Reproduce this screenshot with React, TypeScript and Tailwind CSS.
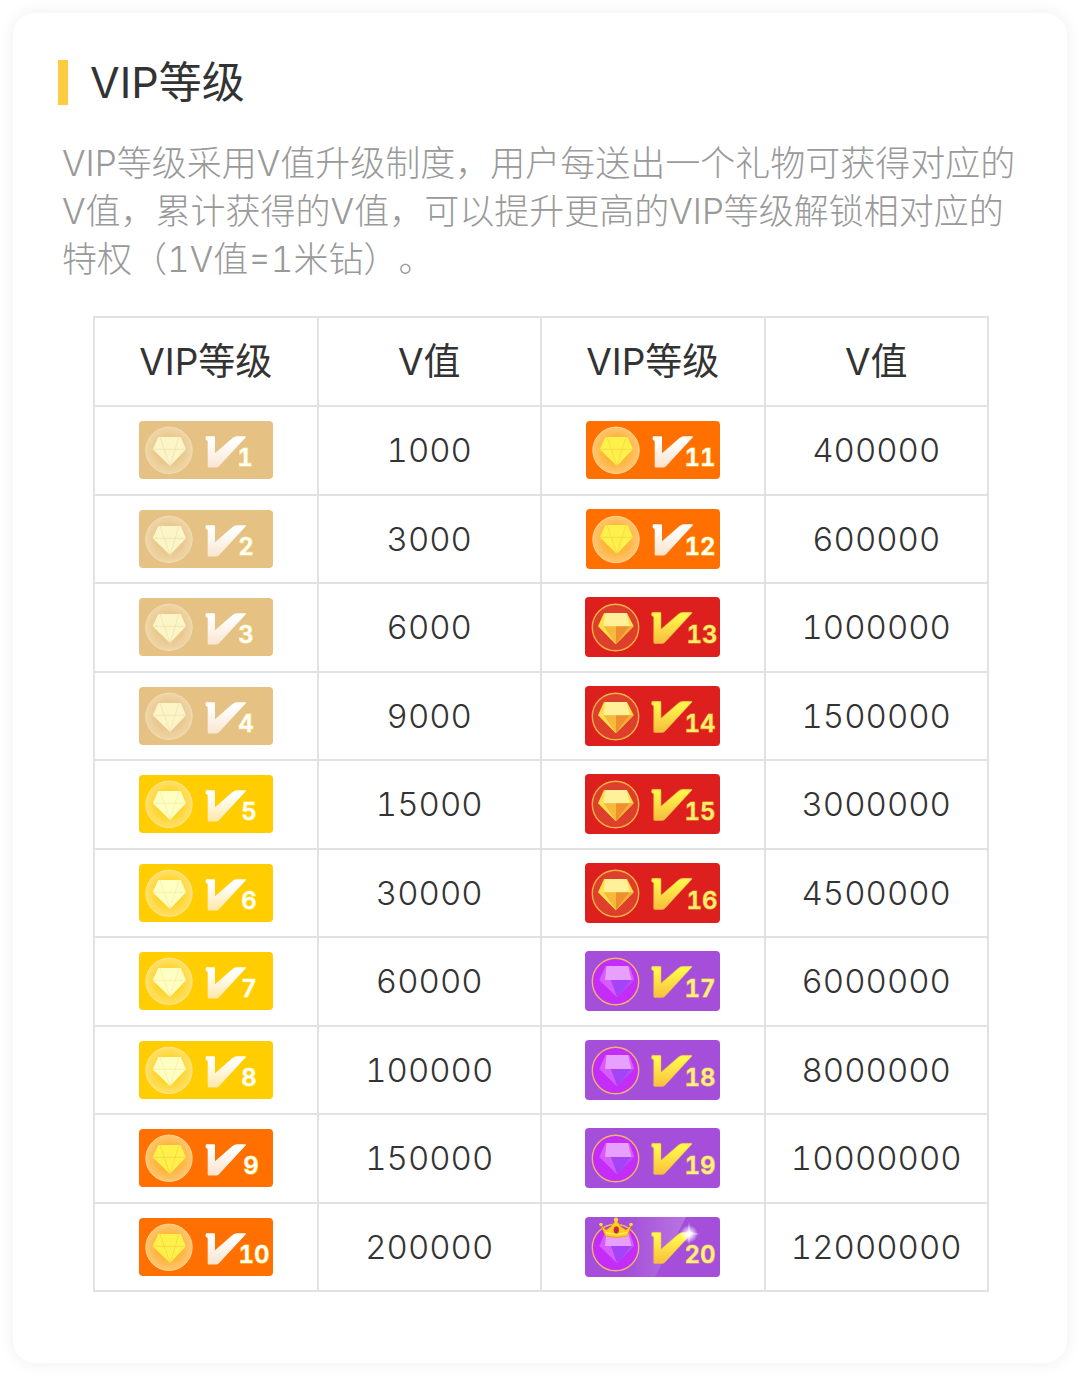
import React from "react";

type Theme = "tan" | "yellow" | "orange" | "red" | "purple";

interface ThemeColors {
  bg: string;
  coinIn: string;
  coinOut: string;
  rim: string;
  vTop: string;
  vBottom: string;
  digit: string;
  glow: string;
}

const themes: Record<Theme, ThemeColors> = {
  tan: { bg: "#e6c184", coinIn: "#e9c78d", coinOut: "#efd6a8", rim: "#f1dcb4", vTop: "#ffffff", vBottom: "#f9e6d2", digit: "#ffffff", glow: "#fff37a" },
  yellow: { bg: "#ffcd00", coinIn: "#ffd52c", coinOut: "#ffe06a", rim: "#ffe58a", vTop: "#ffffff", vBottom: "#ffe8a8", digit: "#ffffff", glow: "#fff37a" },
  orange: { bg: "#ff7000", coinIn: "#ffb43c", coinOut: "#ffc670", rim: "#ffd394", vTop: "#ffffff", vBottom: "#f9e2cc", digit: "#ffffff", glow: "#ffe23c" },
  red: { bg: "#dd1f1d", coinIn: "#dd3f2c", coinOut: "#dd3f2c", rim: "#f3b244", vTop: "#fff44a", vBottom: "#f5bd3c", digit: "#ffee70", glow: "#f5a92c" },
  purple: { bg: "#a44ed9", coinIn: "#c42cf8", coinOut: "#c42cf8", rim: "#eab66a", vTop: "#fff84a", vBottom: "#f9be3c", digit: "#fff27c", glow: "#f3b465" },
};

function PlainDiamond({ color, line }: { color: string; line: string }) {
  return (
    <g>
      <path d="M19.3 16H41.7L47 28.3L31 45L13.7 28.3Z" fill={color} />
      <path d="M13.7 28.3H47M21 16L31 45L40 16" fill="none" stroke={line} strokeWidth="1" opacity="0.55" />
    </g>
  );
}

function RedDiamond() {
  return (
    <g>
      <path d="M19 16H42L48.7 29.3L30.7 47.3L13 29.3Z" fill="#ffe04a" />
      <path d="M20.5 16H41.5L44.7 29.3H18.5Z" fill="#fff09a" />
      <path d="M18.5 29.3H31V47.3Z" fill="#f8b83c" />
      <path d="M31 29.3H44.7L31 47.3Z" fill="#ee9030" />
      <path d="M44.7 29.3H48.7L31 47.3Z" fill="#f5ad38" />
    </g>
  );
}

function PurpleDiamond() {
  return (
    <g>
      <path d="M20.5 15H44.5L49.3 29L32 46.3L14.3 29Z" fill="#d75cfb" />
      <path d="M21.5 15H43L46.5 29H20Z" fill="#e8a0ff" />
      <path d="M26 29H49.3L32 46.3Z" fill="#a444f6" />
      <path d="M45.5 29H49.3L36 42.3Z" fill="#b050f8" />
    </g>
  );
}

function Crown() {
  return (
    <g>
      <path d="M15.5 7.5L21 13L25.5 10L31 3L36.5 10L41 13L46.5 7.5L42.5 19Q31 22 20.5 19Z" fill="#ffcf1c" stroke="#e08a10" strokeWidth="0.7" />
      <path d="M21 15.5Q31 19 42 15.5" fill="none" stroke="#fff38a" strokeWidth="1.2" />
      <circle cx="16" cy="7.5" r="1.8" fill="#ffd93c" />
      <circle cx="46" cy="7.5" r="1.8" fill="#ffd93c" />
      <circle cx="31" cy="2.6" r="2.2" fill="#ffd93c" />
      <ellipse cx="31.3" cy="13" rx="2.5" ry="3.4" fill="#d3185c" stroke="#a8600c" strokeWidth="0.6" />
    </g>
  );
}

function Badge({ level, theme, height, center }: { level: number; theme: Theme; height: 58 | 60; center: number }) {
  const c = themes[theme];
  const id = "b" + level;
  const metal = theme === "red" || theme === "purple";
  const cy = height === 58 ? 29.3 : 30.5;
  return (
    <svg viewBox={`0 0 ${metal ? 135 : 134} ${height}`} className={metal ? "mx-auto block w-[135px]" : "mx-auto block w-[134px]"} role="img" aria-label={`V${level}`}>
      <defs>
        <radialGradient id={id + "c"}>
          <stop offset="0.55" stopColor={c.coinIn} />
          <stop offset="1" stopColor={c.coinOut} />
        </radialGradient>
        <linearGradient id={id + "v"} x1="0" y1="0" x2="0" y2="1">
          <stop offset="0.15" stopColor={c.vTop} />
          <stop offset="1" stopColor={c.vBottom} />
        </linearGradient>
        <linearGradient id={id + "s"} x1="0" y1="0" x2="1" y2="0">
          <stop offset="0.4" stopColor="#fff" stopOpacity="0" />
          <stop offset="1" stopColor="#fff" stopOpacity="0.22" />
        </linearGradient>
        <radialGradient id={id + "f"}>
          <stop offset="0.15" stopColor="#fff" />
          <stop offset="1" stopColor="#fff" stopOpacity="0" />
        </radialGradient>
      </defs>
      <rect width={metal ? 135 : 134} height={height} rx="4" fill={c.bg} />
      {level === 20 && <path d="M0 0H101L70 60H0Z" fill={`url(#${id}s)`} />}
      <circle cx={metal ? 30.5 : 30} cy={cy} r="23.2" fill={`url(#${id}c)`} stroke={c.rim} strokeWidth={metal ? 1.4 : 1} />
      {theme === "tan" && <PlainDiamond color="#fbf5c8" line="#e8dca0" />}
      {theme === "yellow" && <PlainDiamond color="#ffffc4" line="#f3e88c" />}
      {theme === "orange" && <PlainDiamond color="#fff04c" line="#f0cc38" />}
      {theme === "red" && <RedDiamond />}
      {theme === "purple" && <PurpleDiamond />}
      {level === 20 && <Crown />}
      <path
        d="M67 15.3H75Q76 15.3 76 16.3V32.3L93.5 17Q95.5 15.3 98 15.3H106.5Q107.5 15.3 106.8 16.2L80 45.2Q78.8 46.5 77 46.5H69.7Q68.7 46.5 68.7 45.5V20.5Q68.7 19.3 67.5 19.3Q66.7 19 66.5 17.5Z"
        fill={`url(#${id}v)`}
        stroke={metal ? "#f0b05c" : "none"}
        strokeWidth="0.5"
      />
      {level === 20 && (
        <g>
          <circle cx="104" cy="17" r="9" fill={`url(#${id}f)`} />
          <path d="M104 5L105.5 15L115 17L105.5 18.5L104 28L102.5 18.5L94 17L102.5 15Z" fill="#fff" opacity="0.45" />
        </g>
      )}
      <text
        x={center}
        y={height === 58 ? 45 : 46}
        textAnchor="middle"
        fontSize="24"
        fill={c.digit}
        stroke={c.glow}
        strokeWidth="1.2"
        strokeOpacity="0.8"
        paintOrder="stroke"
        className="font-['Inter',sans-serif] font-semibold"
      >
        {level}
      </text>
    </svg>
  );
}

interface Level {
  level: number;
  theme: Theme;
  height: 58 | 60;
  center: number;
  value: string;
}

const rows: [Level, Level][] = [
  [{ level: 1, theme: "tan", height: 58, center: 106, value: "1000" }, { level: 11, theme: "orange", height: 58, center: 114, value: "400000" }],
  [{ level: 2, theme: "tan", height: 58, center: 107, value: "3000" }, { level: 12, theme: "orange", height: 60, center: 114, value: "600000" }],
  [{ level: 3, theme: "tan", height: 58, center: 107, value: "6000" }, { level: 13, theme: "red", height: 60, center: 117, value: "1000000" }],
  [{ level: 4, theme: "tan", height: 58, center: 107, value: "9000" }, { level: 14, theme: "red", height: 60, center: 115, value: "1500000" }],
  [{ level: 5, theme: "yellow", height: 58, center: 110, value: "15000" }, { level: 15, theme: "red", height: 60, center: 115, value: "3000000" }],
  [{ level: 6, theme: "yellow", height: 58, center: 110, value: "30000" }, { level: 16, theme: "red", height: 60, center: 117, value: "4500000" }],
  [{ level: 7, theme: "yellow", height: 58, center: 110, value: "60000" }, { level: 17, theme: "purple", height: 60, center: 115, value: "6000000" }],
  [{ level: 8, theme: "yellow", height: 58, center: 110, value: "100000" }, { level: 18, theme: "purple", height: 60, center: 115, value: "8000000" }],
  [{ level: 9, theme: "orange", height: 58, center: 112, value: "150000" }, { level: 19, theme: "purple", height: 60, center: 115, value: "10000000" }],
  [{ level: 10, theme: "orange", height: 58, center: 115, value: "200000" }, { level: 20, theme: "purple", height: 60, center: 115, value: "12000000" }],
];

const cell = "border-2 border-[#e2e2e2] p-0 text-center align-middle";

export default function App() {
  return (
    <main className="bg-white p-[13px] font-['Inter','Noto_Sans_CJK_SC',sans-serif] text-[#333]" lang="zh-CN">
      <section className="rounded-[22px] bg-white px-[45px] pt-[47px] pb-[71px] shadow-[0_0_16px_rgba(0,0,0,0.07)]">
        <h1 className="flex h-[45px] items-center gap-[22px] text-[43px] font-normal">
          <span className="h-[45px] w-[10px] bg-[#ffcb40]" />
          VIP等级
        </h1>
        <p className="mt-[34px] pl-1 text-[35px] leading-[48px] font-light tabular-nums text-[#999] [text-spacing-trim:space-all]">
          VIP等级采用V值升级制度，用户每送出一个礼物可获得对应的V值，累计获得的V值，可以提升更高的VIP等级解锁相对应的特权（1V值=1米钻）。
        </p>
        <div className="mt-[33px] pr-[33px] pl-[35px]">
          <table className="h-[976px] w-full table-fixed border-collapse text-[33px] leading-[48px] tabular-nums">
            <thead>
              <tr className="h-[89px] text-[37px]">
                {["VIP等级", "V值", "VIP等级", "V值"].map((t, i) => (
                  <th key={i} scope="col" className={`${cell} font-normal`}>{t}</th>
                ))}
              </tr>
            </thead>
            <tbody>
              {rows.map((pair) => (
                <tr key={pair[0].level} className="h-[88px]">
                  {pair.map((l) => (
                    <React.Fragment key={l.level}>
                      <td className={cell}><Badge level={l.level} theme={l.theme} height={l.height} center={l.center} /></td>
                      <td className={`${cell} font-light`}>{l.value}</td>
                    </React.Fragment>
                  ))}
                </tr>
              ))}
            </tbody>
          </table>
        </div>
      </section>
    </main>
  );
}
